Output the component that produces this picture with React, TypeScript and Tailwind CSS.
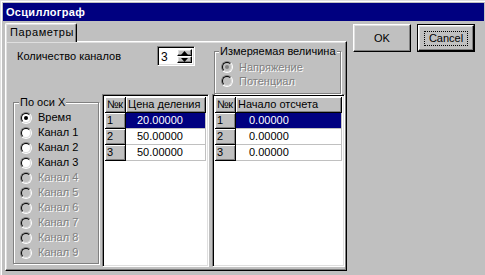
import React from "react";

// Win98-style dialog: "Осциллограф"

const raised = "border-t border-l border-t-white border-l-white border-r border-b border-r-black border-b-black shadow-[inset_-1px_-1px_#808080,inset_1px_1px_#dfdfdf]";
const sunken = "border-t border-l border-t-[#808080] border-l-[#808080] border-r border-b border-r-white border-b-white shadow-[inset_1px_1px_#000,inset_-1px_-1px_#dfdfdf]";
const disabledText = "text-[#808080] [text-shadow:1px_1px_0_#fff]";

function Radio({ label, checked, disabled }: { label: string; checked?: boolean; disabled?: boolean }) {
  return (
    <div className="flex items-center gap-[6px] h-full">
      <div className="w-[12px] h-[12px] rounded-full border border-t-[#808080] border-l-[#808080] border-b-white border-r-white shrink-0">
        <div
          className={
            "w-full h-full rounded-full border border-t-black border-l-black border-b-[#dfdfdf] border-r-[#dfdfdf] flex items-center justify-center " +
            (disabled ? "bg-[#c0c0c0]" : "bg-white")
          }
        >
          {checked && <div className={"w-[4px] h-[4px] rounded-full " + (disabled ? "bg-[#808080]" : "bg-black")} />}
        </div>
      </div>
      <span className={"leading-[13px] " + (disabled ? disabledText : "")}>{label}</span>
    </div>
  );
}

function Grid({ outer, col2, pad, title, values }: { outer: string; col2: string; pad: string; title: string; values: string[] }) {
  const fixed = "w-[21px] shrink-0 bg-[#c0c0c0] border-r border-b border-black shadow-[inset_1px_1px_#fff,inset_-1px_-1px_#808080] pl-[2px] leading-[15px]";
  return (
    <div className={"bg-white h-[173px] p-[2px] " + sunken + " " + outer}>
      <div className="flex h-[16px]">
        <div className={fixed + " tracking-[-0.5px]"}>№к</div>
        <div className={"bg-[#c0c0c0] border-r border-b border-black shadow-[inset_1px_1px_#fff,inset_-1px_-1px_#808080] pl-[2px] leading-[15px] " + col2}>{title}</div>
      </div>
      {values.map((v, i) => (
        <div key={i} className="flex h-[16px]">
          <div className={fixed}>{i + 1}</div>
          <div
            className={
              "border-r border-b border-[#c0c0c0] leading-[15px] " + pad + " " + col2 + " " +
              (i === 0 ? "bg-[#000080] text-white" : "bg-white")
            }
          >
            {v}
          </div>
        </div>
      ))}
    </div>
  );
}

export default function App() {
  const channels = ["Канал 1", "Канал 2", "Канал 3", "Канал 4", "Канал 5", "Канал 6", "Канал 7", "Канал 8", "Канал 9"];

  return (
    <div className="w-[485px] h-[275px] overflow-hidden bg-[#c0c0c0] font-['Liberation_Sans',Arial,sans-serif] text-[11px] text-black">
      <div className="w-full h-full border-t border-l border-[#dfdfdf] border-r-black border-b-black">
        <div className="w-full h-full border-t border-l border-white border-r-[#808080] border-b-[#808080] p-[1px]">
          {/* title bar */}
          <div className="h-[18px] bg-[#000080] text-white font-bold text-[11px] tracking-[0.3px] pl-[3px] flex items-center">
            Осциллограф
          </div>

          <div className="flex pt-[2px] pl-[2px]">
            {/* tab control */}
            <div className="flex flex-col w-[342px]">
              <div className="relative z-10 w-[72px] h-[19px] -mb-[1px] bg-[#c0c0c0] border-t border-l border-white border-r border-r-black rounded-t-[2px] shadow-[inset_-1px_0_#808080,inset_1px_1px_#dfdfdf] pl-[4px] leading-[17px] tracking-[0.6px]">
                Параметры
              </div>
              <div className={"h-[230px] bg-[#c0c0c0] flex flex-col " + raised}>
                {/* top row */}
                <div className="flex h-[52px]">
                  <div className="ml-[11px] mt-[4px] w-[140px] h-[20px] flex items-center">Количество каналов</div>
                  <div className={"mt-[4px] w-[38px] h-[20px] bg-white flex p-[2px] " + sunken}>
                    <span className="flex-1 pl-[1px] leading-[16px] text-[12px]">3</span>
                    <div className="w-[15px] flex flex-col">
                      <div className={"h-[8px] bg-[#c0c0c0] flex items-center justify-center " + raised}>
                        <svg width="7" height="4" viewBox="0 0 7 4"><path d="M3.5 0 L7 4 L0 4 Z" fill="#000" /></svg>
                      </div>
                      <div className={"h-[8px] bg-[#c0c0c0] flex items-center justify-center " + raised}>
                        <svg width="7" height="4" viewBox="0 0 7 4"><path d="M0 0 L7 0 L3.5 4 Z" fill="#000" /></svg>
                      </div>
                    </div>
                  </div>
                  <div className="relative ml-[19px] mt-[9px] w-[127px] h-[43px] border border-[#808080] shadow-[inset_1px_1px_#fff,1px_1px_#fff] pt-[8px] pl-[6px]">
                    <span className="absolute left-[4px] -top-[7px] bg-[#c0c0c0] px-[1px] leading-[13px]">Измеряемая величина</span>
                    <div className="h-[14px]"><Radio label="Напряжение" checked disabled /></div>
                    <div className="h-[14px]"><Radio label="Потенциал" disabled /></div>
                  </div>
                </div>

                {/* bottom row */}
                <div className="flex">
                  <div className="relative ml-[7px] mt-[8px] w-[86px] h-[162px] border border-[#808080] shadow-[inset_1px_1px_#fff,1px_1px_#fff] pt-[7px] pl-[6px]">
                    <span className="absolute left-[5px] -top-[7px] bg-[#c0c0c0] px-[1px] leading-[13px]">По оси X</span>
                    <div className="h-[15px]"><Radio label="Время" checked /></div>
                    {channels.map((c, i) => (
                      <div key={c} className="h-[15px]"><Radio label={c} disabled={i > 2} /></div>
                    ))}
                  </div>
                  <div className="ml-[3px]">
                    <Grid outer="w-[107px]" col2="w-[81px]" pad="pl-[11px]" title="Цена деления" values={["20.00000", "50.00000", "50.00000"]} />
                  </div>
                  <div className="ml-[3px]">
                    <Grid outer="w-[133px]" col2="w-[107px]" pad="pl-[13px]" title="Начало отсчета" values={["0.00000", "0.00000", "0.00000"]} />
                  </div>
                </div>
              </div>
            </div>

            {/* buttons */}
            <div className="flex gap-[6px] ml-[6px] mt-[1px]">
              <div className={"w-[58px] h-[28px] bg-[#c0c0c0] flex items-center justify-center " + raised}>OK</div>
              <div className="w-[58px] h-[28px] border border-black">
                <div className={"w-full h-full bg-[#c0c0c0] flex items-center justify-center " + raised}>
                  <span className="border border-dotted border-black px-[4px] leading-[13px]">Cancel</span>
                </div>
              </div>
            </div>
          </div>
        </div>
      </div>
    </div>
  );
}
